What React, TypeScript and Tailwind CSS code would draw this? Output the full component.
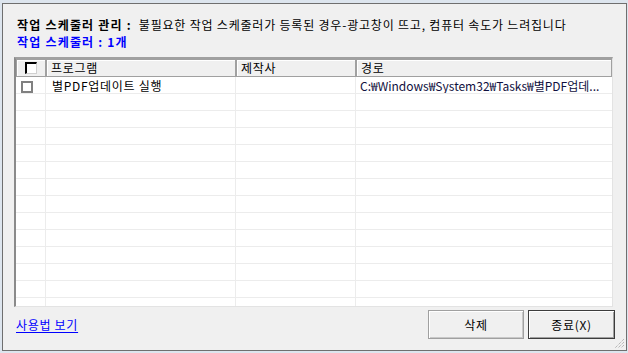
import React from "react";

const FONT = { fontFamily: '"Noto Sans CJK KR", "Noto Sans", sans-serif' };

const ROWS = 14;

const HeaderCell: React.FC<{ children?: React.ReactNode; className?: string }> = ({ children, className = "" }) => (
  <div
    className={`h-[18px] border border-[#a0a0a0] bg-[#f0f0f0] shadow-[inset_1px_1px_0_#ffffff] flex items-center text-[12px] leading-none text-black ${className}`}
  >
    {children}
  </div>
);

export default function App() {
  return (
    <div className="w-[628px] h-[353px] bg-[#dde5ee] pt-[3px] pl-[2px] overflow-hidden tracking-[0.7px]" style={FONT}>
      <div className="relative w-[625px] h-[348px] border border-[#6f6f6f] bg-[#f0f0f0] flex flex-col">
        {/* header texts */}
        <div className="pl-[14px] pt-[12px] text-[12px] leading-[18px] text-black whitespace-nowrap">
          <span className="font-bold tracking-[1.2px]">작업 스케줄러 관리 :</span>
          <span className="ml-[7px] tracking-[0.8px]">불필요한 작업 스케줄러가 등록된 경우-광고창이 뜨고, 컴퓨터 속도가 느려집니다</span>
        </div>
        <div className="pl-[14px] -mt-[1px] text-[12px] leading-[18px] font-bold tracking-[1.2px] text-[#0000ff]">
          작업 스케줄러 : 1개
        </div>

        {/* list */}
        <div className="ml-[11px] mt-[6px] w-[599px] h-[250px] border-t-2 border-l-2 border-t-[#a0a0a0] border-l-[#8a8a8a] border-r border-b border-r-[#e3e3e3] border-b-[#e3e3e3] bg-white overflow-hidden">
          <div className="grid grid-cols-[30px_190px_120px_1fr]">
            <HeaderCell className="justify-center">
              <div className="w-[12px] h-[12px] border-t-2 border-l-2 border-black border-r border-b border-r-[#d0d0d0] border-b-[#d0d0d0] bg-white" />
            </HeaderCell>
            <HeaderCell className="pl-[4px]">프로그램</HeaderCell>
            <HeaderCell className="pl-[4px]">제작사</HeaderCell>
            <HeaderCell className="pl-[4px]">경로</HeaderCell>
          </div>
          {Array.from({ length: ROWS }).map((_, i) => (
            <div key={i} className="grid grid-cols-[30px_190px_120px_1fr] h-[17px] border-b border-[#ececec]">
              <div className="border-r border-[#ececec] flex items-end pl-[5px]">
                {i === 0 && <div className="w-[12px] h-[12px] border-2 border-[#808080] bg-white" />}
              </div>
              <div className="border-r border-[#ececec] flex items-end pl-[6px] text-[12px] leading-[14px] text-black whitespace-nowrap">
                {i === 0 && "별PDF업데이트 실행"}
              </div>
              <div className="border-r border-[#ececec]" />
              <div className="flex items-end pl-[4px] text-[12px] leading-[14px] tracking-normal text-[#101040] whitespace-nowrap overflow-hidden">
                {i === 0 && "C:₩Windows₩System32₩Tasks₩별PDF업데..."}
              </div>
            </div>
          ))}
        </div>

        {/* bottom bar */}
        <div className="flex items-center mt-[3px] pr-[11px]">
          <span className="ml-[13px] text-[12px] leading-none text-[#0000ff] underline underline-offset-2">사용법 보기</span>
          <div className="ml-auto flex gap-[4px]">
            <button className="w-[96px] h-[29px] border border-[#a0a0a0] shadow-[inset_1px_1px_0_#ffffff,inset_-1px_-1px_0_#c8c8c8] bg-[#f0f0f0] text-[12px] leading-none text-black">
              삭제
            </button>
            <button className="w-[87px] h-[29px] border border-[#3c3c3c] shadow-[inset_1px_1px_0_#ffffff,inset_-1px_-1px_0_#a0a0a0] bg-[#f0f0f0] text-[12px] leading-none text-black">
              종료(X)
            </button>
          </div>
        </div>

        {/* size grip */}
        <svg className="absolute right-[1px] bottom-[1px]" width="11" height="11" viewBox="0 0 11 11">
          <path d="M10 1 L1 10 M10 4 L4 10 M10 7 L7 10" stroke="#a0a0a0" strokeWidth="1" strokeDasharray="1 1" />
        </svg>
      </div>
    </div>
  );
}
